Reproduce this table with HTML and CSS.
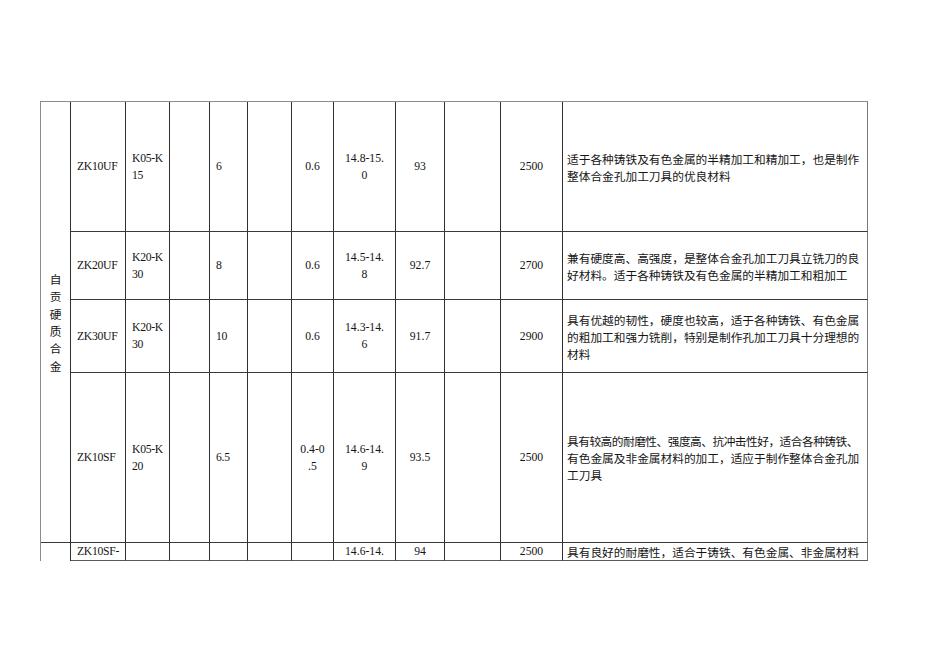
FILE: index.html
```html
<!DOCTYPE html>
<html lang="zh-CN">
<head>
<meta charset="utf-8">
<title>自贡硬质合金</title>
<link rel="stylesheet" href="styles.css">
</head>
<body>
<div class="page">
  <div class="grid">
    <div class="c vert span4"><span class="t">自贡硬质合金</span></div>

    <div class="c code"><span class="t">ZK10UF</span></div>
    <div class="c code"><span class="t">K05-K<br>15</span></div>
    <div class="c"></div>
    <div class="c code"><span class="t">6</span></div>
    <div class="c"></div>
    <div class="c num"><span class="t">0.6</span></div>
    <div class="c num"><span class="t">14.8-15.<br>0</span></div>
    <div class="c num"><span class="t">93</span></div>
    <div class="c"></div>
    <div class="c num"><span class="t">2500</span></div>
    <div class="c desc last"><span class="t">适于各种铸铁及有色金属的半精加工和精加工，也是制作<br>整体合金孔加工刀具的优良材料</span></div>

    <div class="c code"><span class="t">ZK20UF</span></div>
    <div class="c code"><span class="t">K20-K<br>30</span></div>
    <div class="c"></div>
    <div class="c code"><span class="t">8</span></div>
    <div class="c"></div>
    <div class="c num"><span class="t">0.6</span></div>
    <div class="c num"><span class="t">14.5-14.<br>8</span></div>
    <div class="c num"><span class="t">92.7</span></div>
    <div class="c"></div>
    <div class="c num"><span class="t">2700</span></div>
    <div class="c desc last"><span class="t">兼有硬度高、高强度，是整体合金孔加工刀具立铣刀的良<br>好材料。适于各种铸铁及有色金属的半精加工和粗加工</span></div>

    <div class="c code"><span class="t">ZK30UF</span></div>
    <div class="c code"><span class="t">K20-K<br>30</span></div>
    <div class="c"></div>
    <div class="c code"><span class="t">10</span></div>
    <div class="c"></div>
    <div class="c num"><span class="t">0.6</span></div>
    <div class="c num"><span class="t">14.3-14.<br>6</span></div>
    <div class="c num"><span class="t">91.7</span></div>
    <div class="c"></div>
    <div class="c num"><span class="t">2900</span></div>
    <div class="c desc last"><span class="t">具有优越的韧性，硬度也较高，适于各种铸铁、有色金属<br>的粗加工和强力铣削，特别是制作孔加工刀具十分理想的<br>材料</span></div>

    <div class="c code"><span class="t">ZK10SF</span></div>
    <div class="c code"><span class="t">K05-K<br>20</span></div>
    <div class="c"></div>
    <div class="c code"><span class="t">6.5</span></div>
    <div class="c"></div>
    <div class="c num"><span class="t">0.4-0<br>.5</span></div>
    <div class="c num"><span class="t">14.6-14.<br>9</span></div>
    <div class="c num"><span class="t">93.5</span></div>
    <div class="c"></div>
    <div class="c num"><span class="t">2500</span></div>
    <div class="c desc last"><span class="t"><span class="tight">具有较高的耐磨性、强度高、抗冲击性好，适合各种铸铁、</span><br>有色金属及非金属材料的加工，适应于制作整体合金孔加<br>工刀具</span></div>

    <div class="c r5 open"></div>
    <div class="c code r5"><span class="t">ZK10SF-</span></div>
    <div class="c r5"></div>
    <div class="c r5"></div>
    <div class="c r5"></div>
    <div class="c r5"></div>
    <div class="c r5"></div>
    <div class="c num r5"><span class="t">14.6-14.</span></div>
    <div class="c num r5"><span class="t">94</span></div>
    <div class="c r5"></div>
    <div class="c num r5"><span class="t">2500</span></div>
    <div class="c desc last r5"><span class="t">具有良好的耐磨性，适合于铸铁、有色金属、非金属材料</span></div>
  </div>
</div>
</body>
</html>
```
FILE: styles.css
```css
html, body {
  margin: 0;
  padding: 0;
  background: #ffffff;
}

.page {
  padding: 101px 0 0 40px;
}

.grid {
  display: grid;
  grid-template-columns: 30px 55px 44px 40px 38px 44px 42px 62px 49px 56px 62px 305px;
  grid-template-rows: 130px 68px 73px 170px 18px;
  width: 828px;
  box-sizing: border-box;
  border-top: 1px solid #8c8c8c;
  border-left: 1px solid #8c8c8c;
  color: #151515;
}

.c {
  box-sizing: border-box;
  border-right: 1px solid #303030;
  border-bottom: 1px solid #3a3a3a;
  display: flex;
  align-items: center;
  min-width: 0;
  overflow: hidden;
}

.t {
  display: block;
  line-height: 17px;
  white-space: nowrap;
}

.span4 {
  grid-row: span 4;
}

.vert {
  justify-content: center;
  font-family: "Noto Sans CJK SC", sans-serif;
  font-size: 11.7px;
}

.vert .t {
  width: 1em;
  white-space: normal;
  line-height: 17.4px;
  text-align: center;
}

.code {
  justify-content: flex-start;
  padding-left: 6px;
  font-family: "Liberation Serif", serif;
  font-size: 11.7px;
  letter-spacing: -0.3px;
}

.num {
  justify-content: center;
  text-align: center;
  font-family: "Liberation Serif", serif;
  font-size: 11.7px;
}

.desc {
  justify-content: flex-start;
  padding-left: 4px;
  font-family: "Noto Sans CJK SC", sans-serif;
  font-size: 11.7px;
}

.tight {
  letter-spacing: -0.5px;
}

.last {
  border-right: 1px solid #7a7a7a;
}

.r5 {
  border-bottom-color: #5a5a5a;
}

.open {
  border-bottom: none;
}
```
